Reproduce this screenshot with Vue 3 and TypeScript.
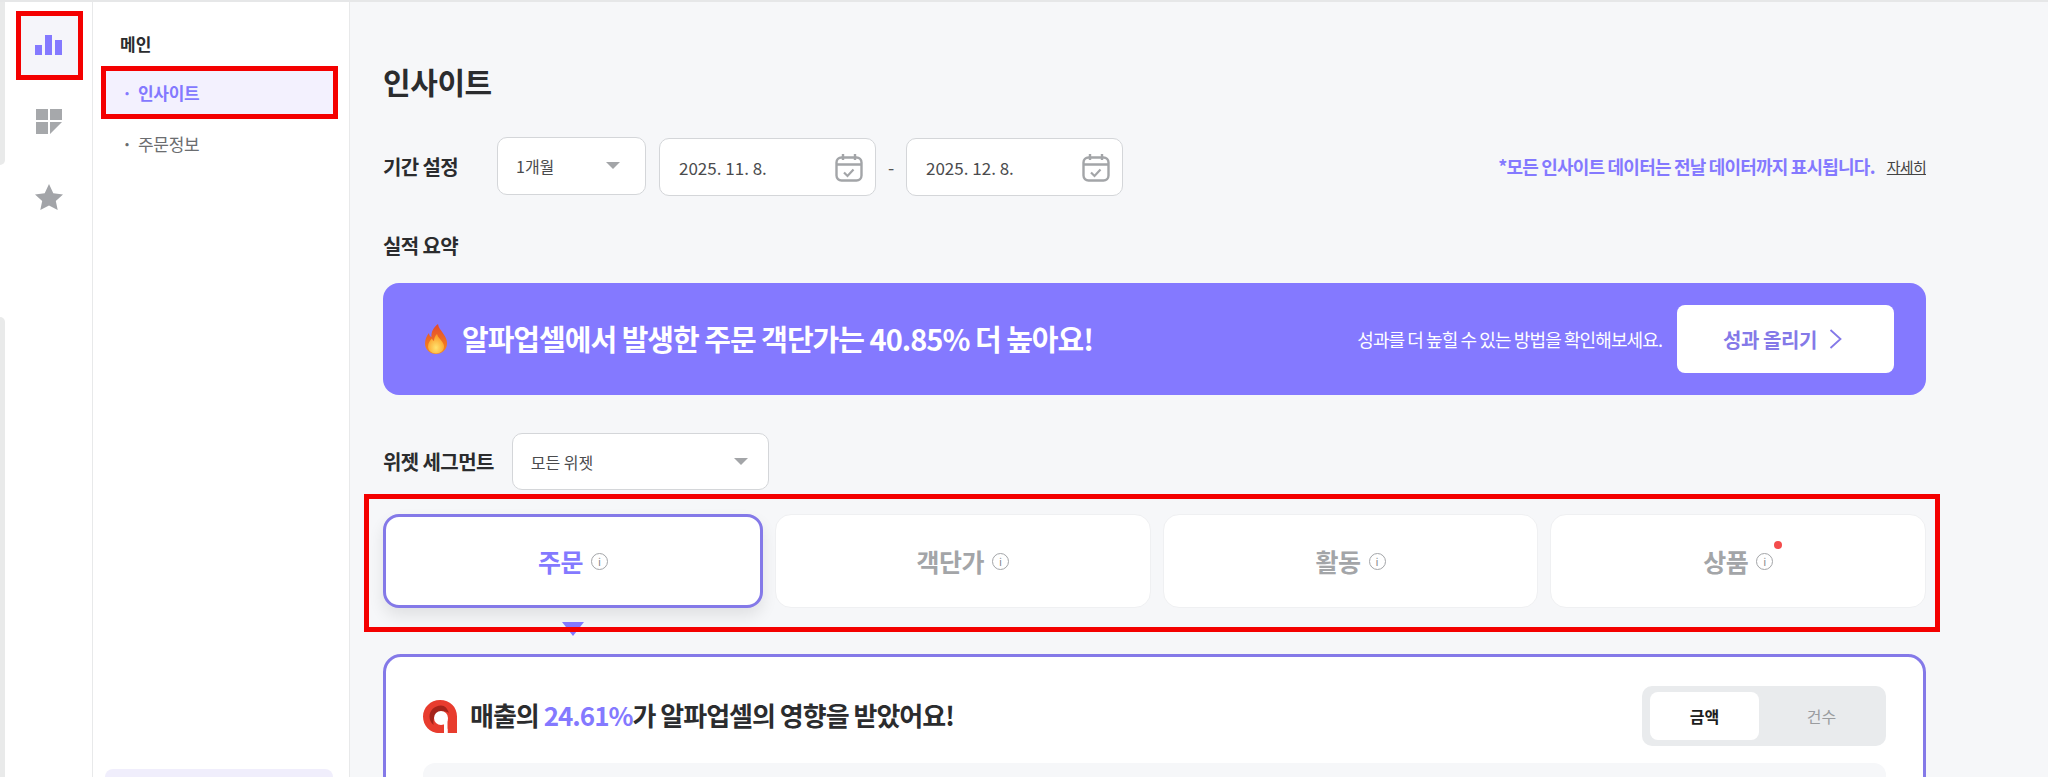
<template>
  <div class="page">
    <!-- Window edge on the far left -->
    <div class="edge">
      <div class="edge__top" />
      <div class="edge__bottom" />
    </div>

    <!-- Icon rail -->
    <aside class="rail">
      <div class="rail__item rail__item--active">
        <svg width="27" height="20" viewBox="0 0 27 20"><path fill="#8479ff" d="M0 10h7v10H0zM10 0h7v20h-7zM20 5h7v15h-7z" /></svg>
      </div>
      <div class="rail__item">
        <svg width="26" height="25" viewBox="0 0 26 25"><path fill="#a6a8ab" d="M0 0h12v11H0zM14 0h12v11H14zM0 13h12v12H0zM14 13h12L14 25z" /></svg>
      </div>
      <div class="rail__item">
        <svg width="28" height="26" viewBox="0 0 28 26"><path fill="#a2a4a8" d="M14 0l4.300 9.200 9.700 1.200-7.200 6.700 1.900 8.900L14 21.500 5.300 26l1.900-8.900L0 10.400l9.700-1.200z" /></svg>
      </div>
    </aside>

    <!-- Menu -->
    <nav class="menu">
      <div class="menu__title">메인</div>
      <div class="menu__item menu__item--active"><span class="menu__dot">·</span>인사이트</div>
      <div class="menu__item"><span class="menu__dot">·</span>주문정보</div>
      <div class="menu__spacer" />
      <div class="menu__promo" />
    </nav>

    <!-- Main -->
    <main class="main">
      <h1 class="main__title">인사이트</h1>

      <div class="period">
        <span class="label period__label">기간 설정</span>
        <div class="select select--period"><span>1개월</span><i class="caret" /></div>
        <div class="date">
          <span>2025. 11. 8.</span>
          <svg class="date__icon" width="28" height="29" viewBox="0 0 28 29" fill="none" stroke="#a3a5a8" stroke-width="2.400"><rect x="1.500" y="4.500" width="25" height="23" rx="5" /><path d="M1.500 11.500h25M8 1v6M20 1v6" /><path d="M9 19.500l3.500 3.500 6-6.500" stroke-width="2.200" /></svg>
        </div>
        <span class="period__dash">-</span>
        <div class="date">
          <span>2025. 12. 8.</span>
          <svg class="date__icon" width="28" height="29" viewBox="0 0 28 29" fill="none" stroke="#a3a5a8" stroke-width="2.400"><rect x="1.500" y="4.500" width="25" height="23" rx="5" /><path d="M1.500 11.500h25M8 1v6M20 1v6" /><path d="M9 19.500l3.500 3.500 6-6.500" stroke-width="2.200" /></svg>
        </div>
        <span class="period__note">*모든 인사이트 데이터는 전날 데이터까지 표시됩니다.</span>
        <a class="period__more">자세히</a>
      </div>

      <div class="label summary-label">실적 요약</div>

      <section class="banner">
        <svg class="banner__fire" width="22" height="30" viewBox="0 0 22 30">
          <defs>
            <linearGradient id="fire" x1="0" y1="0" x2="0" y2="1"><stop offset="0" stop-color="#e4492c" /><stop offset="1" stop-color="#f68a1f" /></linearGradient>
            <radialGradient id="fireCore" cx="0.500" cy="0.700" r="0.600"><stop offset="0" stop-color="#ffe36e" /><stop offset="1" stop-color="#fb9f2a" /></radialGradient>
          </defs>
          <path fill="url(#fire)" d="M13 0c.5 4 3 6 5.500 10 2.500 3.500 3.500 6 3.500 9.500C22 25.500 17 30 11 30S0 25.500 0 19.500C0 15 2 11.500 4 9c0 2 1 3.500 2.500 4C6 8 8.500 3.500 13 0z" />
          <path fill="url(#fireCore)" d="M12 10c.5 3 3 4.500 5 7.500 1.500 2 2 3.500 2 5 0 4-3.500 7-8 7s-8-3-8-7c0-3.500 2-6 4-8 .3 1.300 1 2 2 2.500 0-3 1-5 3-7z" />
        </svg>
        <strong class="banner__title">알파업셀에서 발생한 주문 객단가는 40.85% 더 높아요!</strong>
        <span class="banner__hint">성과를 더 높힐 수 있는 방법을 확인해보세요.</span>
        <button class="banner__btn">성과 올리기
          <svg width="13" height="20" viewBox="0 0 13 20" fill="none" stroke="#8479e8" stroke-width="1.800"><path d="M1.500 1l10 9-10 9" /></svg>
        </button>
      </section>

      <div class="segment">
        <span class="label">위젯 세그먼트</span>
        <div class="select select--segment"><span>모든 위젯</span><i class="caret" /></div>
      </div>

      <div class="tabs">
        <div v-for="tab in tabs" :key="tab.name" class="tab" :class="{ 'tab--active': tab.active }">
          <span class="tab__name">{{ tab.name }}</span>
          <span class="tab__info">i<b v-if="tab.dot" class="tab__dot" /></span>
          <i v-if="tab.active" class="tab__pointer" />
        </div>
      </div>

      <section class="card">
        <div class="card__head">
          <svg width="34" height="33" viewBox="0 0 34 33">
            <path fill="#e83c2e" d="M17 0c10 0 17 7 17 16.500V33H24.500v-4.500C22 31.500 19.500 33 16 33 7 33 0 25.500 0 16.500S7.500 0 17 0z" />
            <path fill="#a5231a" d="M18 5.500c-6.500 0-11.500 5-11.500 11 0 3.500 1.500 6.500 4 8.500C9.500 16 14 11 22 11.500c2 .2 3 .8 4 1.500-1.500-4.500-4-7.500-8-7.500z" />
            <circle cx="18" cy="18" r="7" fill="#fff" />
            <path fill="#fff" d="M21 18h3.500v15H21z" />
            <path fill="#e83c2e" d="M13.500 27.500c2.500.8 5 .6 7.500-.5v6h-5c-1 0-2-.3-2.500-.5z" />
          </svg>
          <h2 class="card__title">매출의 <em>24.61%</em>가 알파업셀의 영향을 받았어요!</h2>
          <div class="toggle">
            <span class="toggle__opt toggle__opt--active">금액</span>
            <span class="toggle__opt">건수</span>
          </div>
        </div>
        <div class="card__panel" />
      </section>
    </main>

    <!-- Reference's red annotation boxes -->
    <div class="mark mark--rail" />
    <div class="mark mark--menu" />
    <div class="mark mark--tabs" />
  </div>
</template>

<script setup lang="ts">
const tabs = [
  { name: '주문', active: true, dot: false },
  { name: '객단가', active: false, dot: false },
  { name: '활동', active: false, dot: false },
  { name: '상품', active: false, dot: true },
]
</script>

<style>
html, body {
  margin: 0;
  height: 777px;
  overflow: hidden;
  background: #fff;
}
</style>

<style scoped>
.page {
  position: relative;
  display: flex;
  width: 2048px;
  height: 777px;
  overflow: hidden;
  box-sizing: border-box;
  border-top: 2px solid #e6e7e8;
  background: #fff;
  color: #2b2c2e;
  font-family: 'Noto Sans CJK KR', 'Noto Sans', sans-serif;
}

/* Left edge */
.edge {
  width: 5px;
  flex-shrink: 0;
  display: flex;
  flex-direction: column;
  justify-content: space-between;
}

.edge__top {
  height: 163px;
  border-radius: 0 0 5px 0;
  background: #e9eaea;
}

.edge__bottom {
  height: 460px;
  border-radius: 0 5px 0 0;
  background: #e9eaea;
}

/* Rail */
.rail {
  width: 88px;
  flex-shrink: 0;
  box-sizing: border-box;
  padding-top: 9px;
  display: flex;
  flex-direction: column;
  align-items: center;
  gap: 8px;
  background: #fff;
  border-right: 1px solid #e8e9ea;
}

.rail__item {
  width: 60px;
  height: 68px;
  display: flex;
  align-items: center;
  justify-content: center;
}

.rail__item--active {
  background: #f5f5fa;
}

/* Menu */
.menu {
  width: 257px;
  flex-shrink: 0;
  box-sizing: border-box;
  padding: 30px 16px 0 12px;
  display: flex;
  flex-direction: column;
  background: #fff;
  border-right: 1px solid #e8e9ea;
}

.menu__title {
  font-size: 17px;
  font-weight: 700;
  line-height: 24px;
  padding-left: 15px;
  margin-bottom: 13px;
}

.menu__item {
  height: 46px;
  display: flex;
  align-items: center;
  padding-left: 17px;
  margin-bottom: 5px;
  font-size: 17px;
  letter-spacing: -0.3px;
  color: #6b6d70;
}

.menu__dot {
  width: 16px;
  font-weight: 700;
}

.menu__item--active {
  background: #f3f1fe;
  color: #8479ff;
  font-weight: 700;
}

.menu__spacer {
  flex: 1;
}

.menu__promo {
  height: 8px;
  border-radius: 12px 12px 0 0;
  background: #f0eefc;
}

/* Main */
.main {
  flex: 1;
  min-width: 0;
  box-sizing: border-box;
  padding: 0 122px 0 33px;
  background: #f6f7f9;
}

.main__title {
  margin: 56px 0 0;
  font-size: 30px;
  font-weight: 700;
  line-height: 46px;
  letter-spacing: -0.4px;
}

.label {
  font-size: 20px;
  font-weight: 700;
  letter-spacing: -0.6px;
  line-height: 26px;
  white-space: nowrap;
}

.period {
  display: flex;
  align-items: center;
  margin-top: 33px;
  height: 59px;
}

.period__label {
  width: 114px;
  flex-shrink: 0;
}

.select,
.date {
  box-sizing: border-box;
  display: flex;
  align-items: center;
  justify-content: space-between;
  background: #fff;
  border: 1px solid #d4d6d9;
  border-radius: 10px;
  font-size: 16px;
  color: #4a4b4d;
}

.select--period {
  width: 149px;
  height: 58px;
  padding: 0 25px 0 18px;
  margin-top: -2px;
}

.date {
  width: 217px;
  height: 58px;
  margin-left: 13px;
  padding: 0 12px 0 19px;
  font-size: 17px;
  margin-top: 1px;
}

.caret {
  width: 0;
  height: 0;
  border-left: 7px solid transparent;
  border-right: 7px solid transparent;
  border-top: 7px solid #a3a5a8;
}

.period__dash {
  width: 30px;
  text-align: center;
  font-size: 18px;
  color: #555;
}

.date + .period__dash + .date {
  margin-left: 0;
}

.period__note {
  margin-left: auto;
  margin-top: -2px;
  font-size: 18px;
  font-weight: 700;
  letter-spacing: -0.8px;
  color: #8479ff;
}

.period__more {
  margin-left: 12px;
  font-size: 15px;
  letter-spacing: -0.7px;
  color: #444;
  text-decoration: underline;
}

.summary-label {
  margin-top: 37px;
}

/* Banner */
.banner {
  display: flex;
  align-items: center;
  height: 112px;
  margin-top: 24px;
  padding: 0 32px 0 42px;
  box-sizing: border-box;
  border-radius: 16px;
  background: #8479ff;
  color: #fff;
}

.banner__title {
  margin: -3px 0 0 15px;
  font-size: 29px;
  font-weight: 700;
  letter-spacing: -1px;
}

.banner__hint {
  margin-left: auto;
  font-size: 18px;
  letter-spacing: -0.9px;
}

.banner__btn {
  width: 217px;
  height: 68px;
  margin-left: 15px;
  padding: 0 6px 0 0;
  display: flex;
  align-items: center;
  justify-content: center;
  gap: 12px;
  border: 0;
  border-radius: 8px;
  background: #fff;
  color: #8479e8;
  font-family: inherit;
  font-size: 20px;
  font-weight: 700;
  letter-spacing: -0.4px;
}

/* Segment */
.segment {
  display: flex;
  align-items: center;
  gap: 18px;
  margin-top: 38px;
}

.select--segment {
  width: 257px;
  height: 57px;
  padding: 0 20px 0 18px;
}

/* Tabs */
.tabs {
  display: grid;
  grid-template-columns: 380px repeat(3, 1fr);
  gap: 12px;
  margin-top: 24px;
}

.tab {
  position: relative;
  height: 94px;
  box-sizing: border-box;
  display: flex;
  align-items: center;
  justify-content: center;
  gap: 8px;
  background: #fff;
  border: 1px solid #eff0f2;
  border-radius: 16px;
  color: #a3a5a8;
}

.tab--active {
  border: 3px solid #8479e8;
  color: #8479ff;
  box-shadow: 0 8px 16px rgba(0, 0, 0, 0.09);
}

.tab__name {
  font-size: 25px;
  font-weight: 700;
  letter-spacing: -0.5px;
}

.tab__info {
  position: relative;
  width: 17px;
  height: 17px;
  box-sizing: border-box;
  border: 1.500px solid #a3a5a8;
  border-radius: 50%;
  display: flex;
  align-items: center;
  justify-content: center;
  font-size: 11px;
  color: #8a8c8f;
}

.tab__dot {
  position: absolute;
  top: -13px;
  right: -10px;
  width: 8px;
  height: 8px;
  border-radius: 50%;
  background: #f44c4c;
}

.tab__pointer {
  position: absolute;
  left: 176px;
  bottom: -31px;
  width: 0;
  height: 0;
  border-left: 11px solid transparent;
  border-right: 11px solid transparent;
  border-top: 14px solid #8479ff;
}

/* Card */
.card {
  margin-top: 46px;
  height: 240px;
  box-sizing: border-box;
  padding: 29px 37px 0;
  background: #fff;
  border: 3px solid #8479e8;
  border-radius: 18px;
}

.card__head {
  display: flex;
  align-items: center;
  height: 60px;
}

.card__title {
  margin: -3px 0 0 13px;
  font-size: 26px;
  font-weight: 700;
  letter-spacing: -1px;
}

.card__title em {
  font-style: normal;
  color: #8479ff;
}

.toggle {
  margin-left: auto;
  width: 244px;
  height: 60px;
  box-sizing: border-box;
  padding: 6px 8px;
  display: flex;
  border-radius: 10px;
  background: #e9ebed;
}

.toggle__opt {
  flex: 1;
  display: flex;
  align-items: center;
  justify-content: center;
  padding-left: 6px;
  font-size: 16px;
  color: #9a9c9f;
}

.toggle__opt--active {
  flex: 0 0 109px;
  padding-left: 0;
  border-radius: 8px;
  background: #fff;
  color: #1d1e20;
  font-weight: 700;
}

.card__panel {
  height: 80px;
  margin-top: 17px;
  border-radius: 12px;
  background: #f6f7f9;
}

/* Red marks sit over the shot */
.mark {
  position: absolute;
  box-sizing: border-box;
  border: 5px solid #f40000;
  pointer-events: none;
}

.mark--rail {
  left: 16px;
  top: 9px;
  width: 67px;
  height: 69px;
}

.mark--menu {
  left: 101px;
  top: 64px;
  width: 237px;
  height: 53px;
}

.mark--tabs {
  left: 364px;
  top: 492px;
  width: 1576px;
  height: 138px;
}
</style>
